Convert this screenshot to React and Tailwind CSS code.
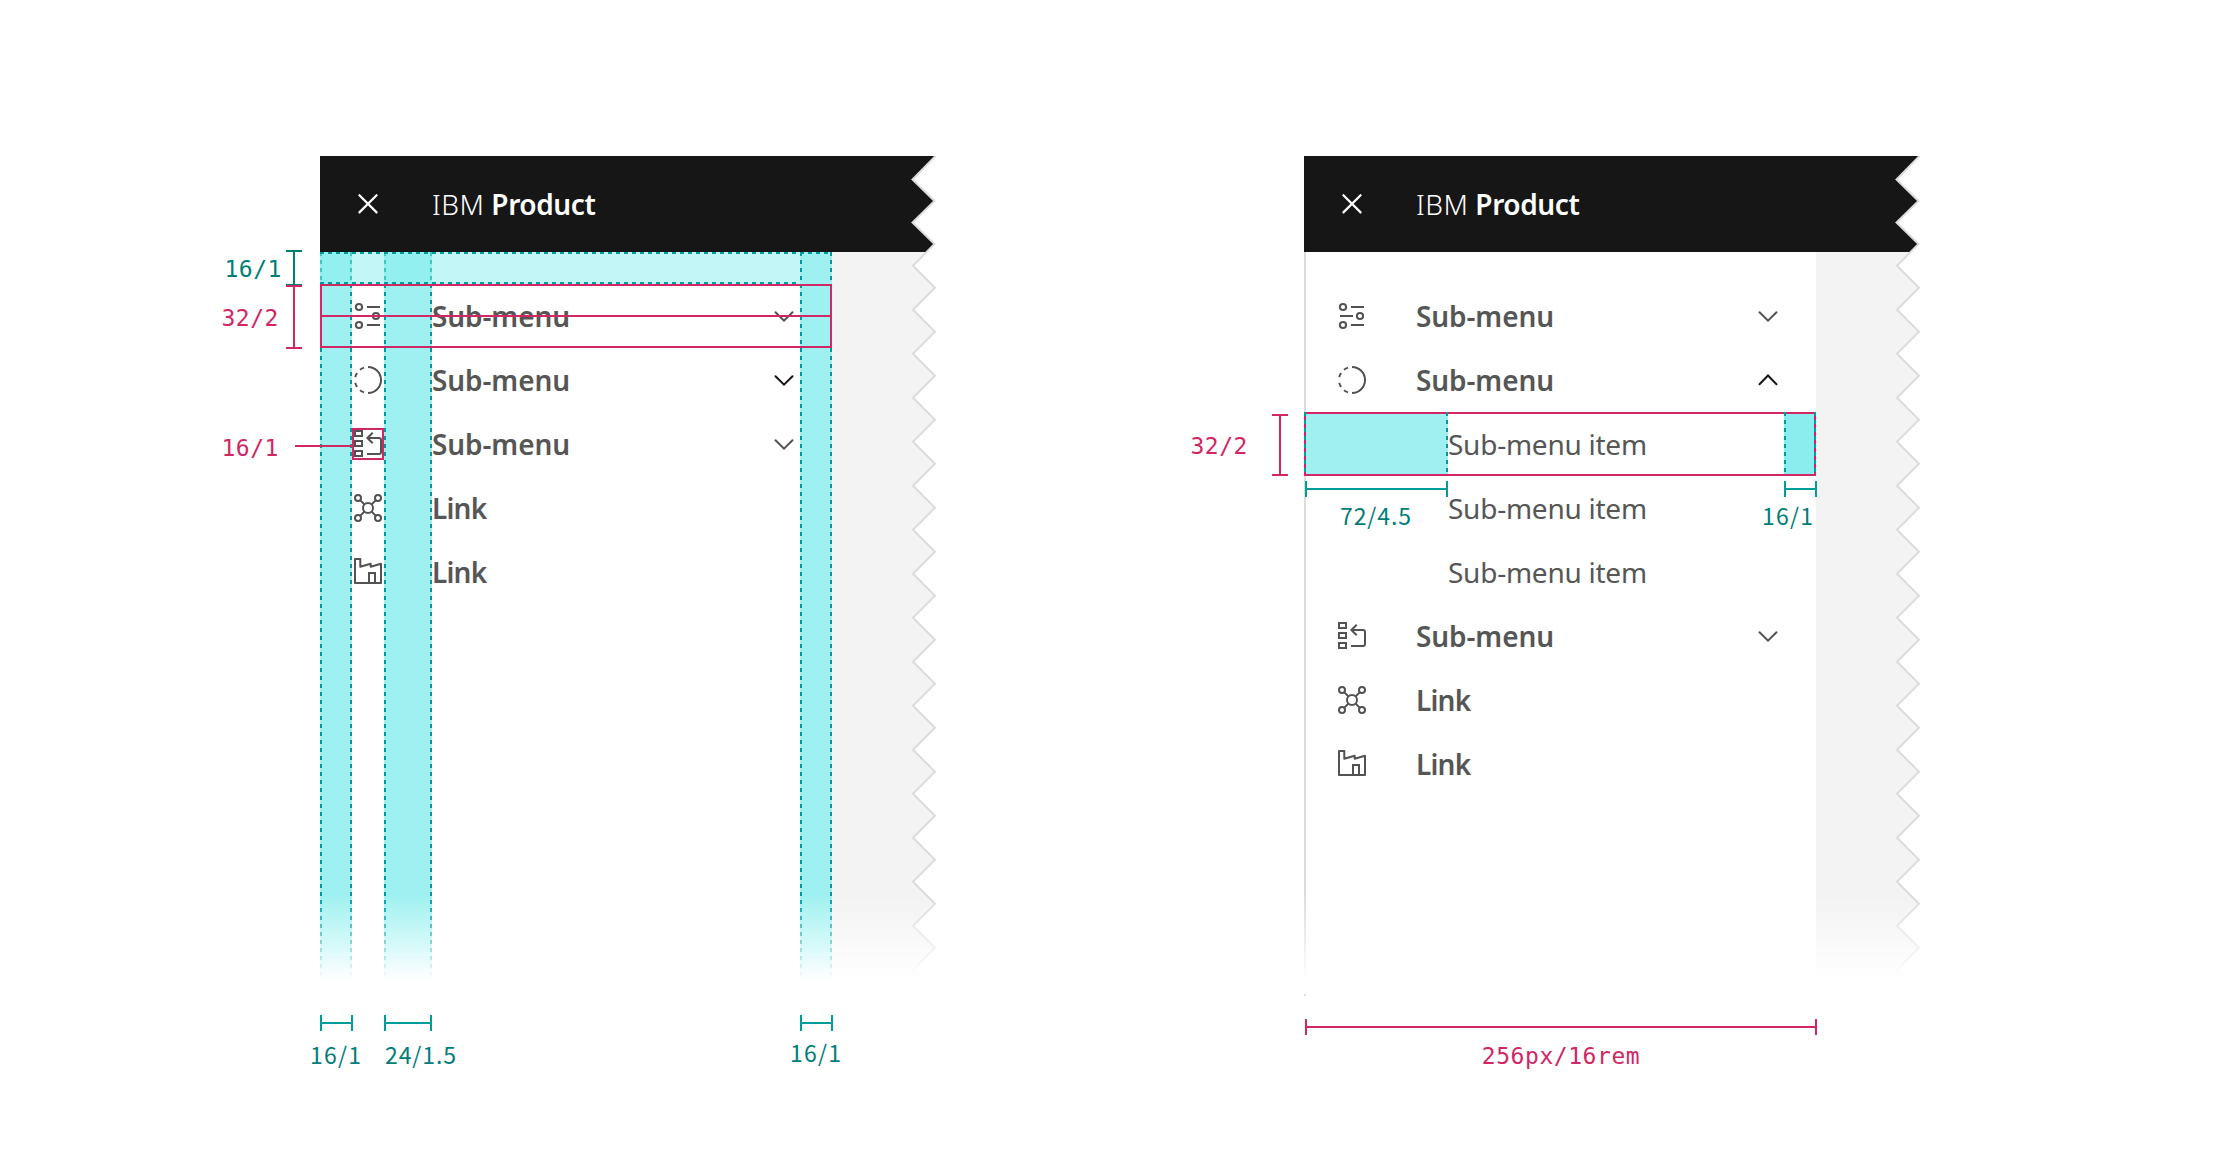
const GRAY = "#525252";

function IconBase({ children }) {
  return (
    <svg width="32" height="32" viewBox="0 0 32 32" fill="none" stroke={GRAY} strokeWidth="2" className="shrink-0">
      {children}
    </svg>
  );
}

const icons = {
  settings: (
    <IconBase>
      <circle cx="7" cy="7" r="3.1" />
      <circle cx="24" cy="16" r="3.1" />
      <circle cx="7" cy="25" r="3.1" />
      <path d="M15 7h13M4 16h13M15 25h13" />
    </IconBase>
  ),
  circleDash: (
    <IconBase>
      <path d="M16 3a13 13 0 0 1 0 26" />
      <path
        d="M16 3a13 13 0 0 0 0 26"
        pathLength="180"
        strokeDasharray="0 18 20 19 20 26 20 19 20 18"
      />
    </IconBase>
  ),
  migrate: (
    <IconBase>
      <path d="M3 3h7v5H3zM3 13h7v5H3zM3 23h7v5H3z" />
      <path d="M20.7 4.7L15.4 10l5.3 5.3" />
      <path d="M15.4 10H27a2 2 0 0 1 2 2v12a2 2 0 0 1-2 2H15" />
    </IconBase>
  ),
  hub: (
    <IconBase>
      <circle cx="16" cy="16" r="5" />
      <circle cx="6" cy="6" r="3" />
      <circle cx="26" cy="6" r="3" />
      <circle cx="6" cy="26" r="3" />
      <circle cx="26" cy="26" r="3" />
      <path d="M8.1 8.1l4.4 4.4M23.9 8.1l-4.4 4.4M8.1 23.9l4.4-4.4M23.9 23.9l-4.4-4.4" />
    </IconBase>
  ),
  factory: (
    <IconBase>
      <path strokeLinejoin="round" d="M3 27V3h5.3v7.8L18.7 7.8v3L29 7.8V27z" />
      <path d="M17 27V17h6v10" />
    </IconBase>
  ),
};

function Chevron({ up, dark }) {
  return (
    <svg
      width="32"
      height="32"
      viewBox="0 0 32 32"
      fill="none"
      stroke={dark ? "#161616" : GRAY}
      strokeWidth="2"
      strokeLinecap="round"
      className="mr-4 shrink-0"
    >
      <path d={up ? "M7.5 20.2L16 11.5l8.5 8.7" : "M7.5 12.2L16 20.7l8.5-8.5"} />
    </svg>
  );
}

function TornEdge() {
  const pts = ["24.5,0", "1.5,23.5", "23.5,45", "1.5,66.5", "23.5,88"];
  for (let k = 0; k < 17; k++) {
    pts.push(`2,${109.7 + 44 * k}`, `24,${131.7 + 44 * k}`);
  }
  const line = pts.join(" ");
  return (
    <svg width="32" height="830" viewBox="0 0 32 830" className="absolute top-0 -right-2">
      <polygon points={`${line} 32,860 32,-2 24.5,-2`} fill="#fff" />
      <polyline points={line} fill="none" stroke="#dcdcdc" strokeWidth="2" />
    </svg>
  );
}

function Row({ icon, label, chevron }) {
  return (
    <li className="flex h-16 items-center pr-4 pl-8">
      {icons[icon]}
      <span
        className={`grow pb-px pl-12 text-[28px] leading-[38px] font-semibold text-[#565656] ${
          label === "Link" ? "tracking-[-0.8px]" : "tracking-[-0.1px]"
        }`}
      >
        {label}
      </span>
      {chevron && <Chevron up={chevron === "up"} dark={chevron !== "down"} />}
    </li>
  );
}

function SubRow() {
  return (
    <li className="flex h-16 items-center pb-px pl-36 text-[28px] leading-[38px] tracking-[-0.25px] text-[#565656]">
      Sub-menu item
    </li>
  );
}

const vDash = "w-0.5 bg-[repeating-linear-gradient(180deg,#009d9a_0_4px,transparent_4px_8px)]";
const hDash = "h-0.5 bg-[repeating-linear-gradient(90deg,#009d9a_0_4px,transparent_4px_8px)]";

function Band({ className }) {
  return (
    <div className={`flex justify-between ${className}`}>
      <div className={vDash} />
      <div className={vDash} />
    </div>
  );
}

function Panel({ children, underlay, overlay, border }) {
  return (
    <section className="relative h-[830px] w-[615px]">
      <header className="flex h-24 items-center bg-[#161616] pl-8 text-white">
        <svg width="32" height="32" viewBox="0 0 32 32" stroke="#fff" strokeWidth="2.2" strokeLinecap="round">
          <path d="M7.4 7.2l17.2 17.2M24.6 7.2L7.4 24.4" />
        </svg>
        <div className="flex gap-[7px] pb-px pl-12 text-[28px] leading-[38px]">
          <span className="font-light tracking-[0.5px]">IBM</span>
          <span className="font-semibold tracking-[-0.4px]">Product</span>
        </div>
      </header>
      <div className="flex h-[734px]">
        <nav className={`relative w-[512px] pt-8 ${border ? "shadow-[inset_2px_0_0_#dcdcdc]" : ""}`}>
          {underlay}
          <ul className="relative">{children}</ul>
          {overlay}
        </nav>
        <div className="grow bg-[#f3f3f3]" />
      </div>
      <TornEdge />
      <div className="absolute -right-2 bottom-0 left-0 h-[90px] bg-[linear-gradient(180deg,rgba(255,255,255,0)_0,#fff_84px)]" />
    </section>
  );
}

const tone = {
  teal: "border-[#009d9a]",
  deep: "border-[#007d79]",
  pink: "border-[#d12765]",
};

function HMeasure({ className = "", color = "teal" }) {
  return (
    <div className={`flex h-4 items-center border-x-2 ${tone[color]} ${className}`}>
      <div className={`w-full border-t-2 ${tone[color]}`} />
    </div>
  );
}

function VMeasure({ className = "", color }) {
  return (
    <div className={`flex w-4 justify-center border-y-2 ${tone[color]} ${className}`}>
      <div className={`h-full border-l-2 ${tone[color]}`} />
    </div>
  );
}

function Mono({ className, children }) {
  return (
    <span className={`font-['DejaVu_Sans_Mono',monospace] text-[23px] leading-6 tracking-[0.55px] whitespace-nowrap ${className}`}>
      {children}
    </span>
  );
}

function Sans({ className, children }) {
  return (
    <span className={`font-['Noto_Sans_CJK_JP',sans-serif] text-[23px] leading-6 whitespace-nowrap text-[#007d79] ${className}`}>
      {children}
    </span>
  );
}

/* Spacing columns and top strip drawn beneath the collapsed menu. */
function SpacingBands() {
  return (
    <div className="absolute inset-0">
      <div className="flex h-full">
        <Band className="w-8 bg-[#9ff1f1]" />
        <Band className="ml-8 w-12 bg-[#9ff1f1]" />
      </div>
      <div className="absolute inset-x-0 top-0 flex h-8 flex-col justify-between bg-[rgba(135,239,239,0.5)]">
        <div className={hDash} />
        <div className={hDash} />
      </div>
      <div className="absolute inset-y-0 right-0 flex w-8 flex-col bg-[#9ff1f1]">
        <div className={hDash} />
        <Band className="-mt-0.5 grow" />
      </div>
    </div>
  );
}

function RowHighlight() {
  return (
    <div className="absolute inset-x-0 top-8">
      <div className="h-16 border-2 border-[#d12765] pt-[29px]">
        <div className="h-0.5 bg-[#d12765]" />
      </div>
      <div className="mt-20 ml-8 size-8 border-2 border-[#d12765]" />
    </div>
  );
}

function SubRowHighlight() {
  return (
    <div className="absolute inset-x-0 top-40">
      <div className="flex h-16 justify-between border-b-2 border-[#d12765] shadow-[inset_0_2px_0_#d12765]">
        <Band className="w-36 bg-[#9ff1f1] shadow-[inset_2px_2px_0_#d12765]" />
        <Band className="w-8 bg-[#8beeee] shadow-[inset_-2px_2px_0_#d12765]" />
      </div>
      <div className="mt-[5px] -mr-px ml-px flex justify-between">
        <div className="flex w-[143px] flex-col gap-1.5">
          <HMeasure />
          <Sans className="ml-[35px] tracking-[0.9px]">72/4.5</Sans>
        </div>
        <div className="flex w-[33px] flex-col gap-1.5">
          <HMeasure />
          <Sans className="-ml-[22px] tracking-[1.2px]">16/1</Sans>
        </div>
      </div>
    </div>
  );
}

export default function App() {
  return (
    <main className="flex h-[1170px] w-[2240px] overflow-hidden bg-white pt-[156px] font-['Noto_Sans',sans-serif]">
      <aside className="relative z-10 flex w-[320px] flex-col items-end pt-[94px] pr-[18px]">
        <div className="flex h-9 gap-1">
          <Mono className="mt-[7px] text-[#007d79]">16/1</Mono>
          <VMeasure color="deep" />
        </div>
        <div className="-mt-px flex h-16 gap-[7px]">
          <Mono className="mt-[21px] text-[#d12765]">32/2</Mono>
          <VMeasure color="pink" />
        </div>
        <div className="-mr-[50px] mt-[87px] flex gap-4">
          <Mono className="text-[#d12765]">16/1</Mono>
          <div className="mt-[9px] h-0.5 w-[57px] bg-[#d12765]" />
        </div>
      </aside>

      <div>
        <Panel underlay={<SpacingBands />} overlay={<RowHighlight />}>
          <Row icon="settings" label="Sub-menu" chevron="down" />
          <Row icon="circleDash" label="Sub-menu" chevron="dark" />
          <Row icon="migrate" label="Sub-menu" chevron="down" />
          <Row icon="hub" label="Link" />
          <Row icon="factory" label="Link" />
        </Panel>
        <div className="mt-[29px] flex w-[513px]">
          <div className="flex w-[33px] flex-col gap-[11px]">
            <HMeasure />
            <Sans className="-ml-2.5 tracking-[1.2px]">16/1</Sans>
          </div>
          <div className="ml-[31px] flex w-12 flex-col gap-[11px]">
            <HMeasure />
            <Sans className="ml-px tracking-[0.9px]">24/1.5</Sans>
          </div>
          <div className="ml-auto flex w-[33px] flex-col gap-[9px]">
            <HMeasure />
            <Sans className="-ml-2.5 tracking-[1.2px]">16/1</Sans>
          </div>
        </div>
      </div>

      <aside className="flex w-[369px] justify-end gap-6 pt-[258px] pr-4">
        <Mono className="mt-5 text-[#d12765]">32/2</Mono>
        <VMeasure className="h-[62px]" color="pink" />
      </aside>

      <div>
        <Panel border overlay={<SubRowHighlight />}>
          <Row icon="settings" label="Sub-menu" chevron="down" />
          <Row icon="circleDash" label="Sub-menu" chevron="up" />
          <SubRow />
          <SubRow />
          <SubRow />
          <Row icon="migrate" label="Sub-menu" chevron="down" />
          <Row icon="hub" label="Link" />
          <Row icon="factory" label="Link" />
        </Panel>
        <div className="mt-2 size-0.5 bg-[#dcdcdc]" />
        <div className="mt-[23px] ml-px flex w-[512px] flex-col gap-[9px]">
          <HMeasure color="pink" />
          <Mono className="text-center text-[#d12765]">256px/16rem</Mono>
        </div>
      </div>
    </main>
  );
}
